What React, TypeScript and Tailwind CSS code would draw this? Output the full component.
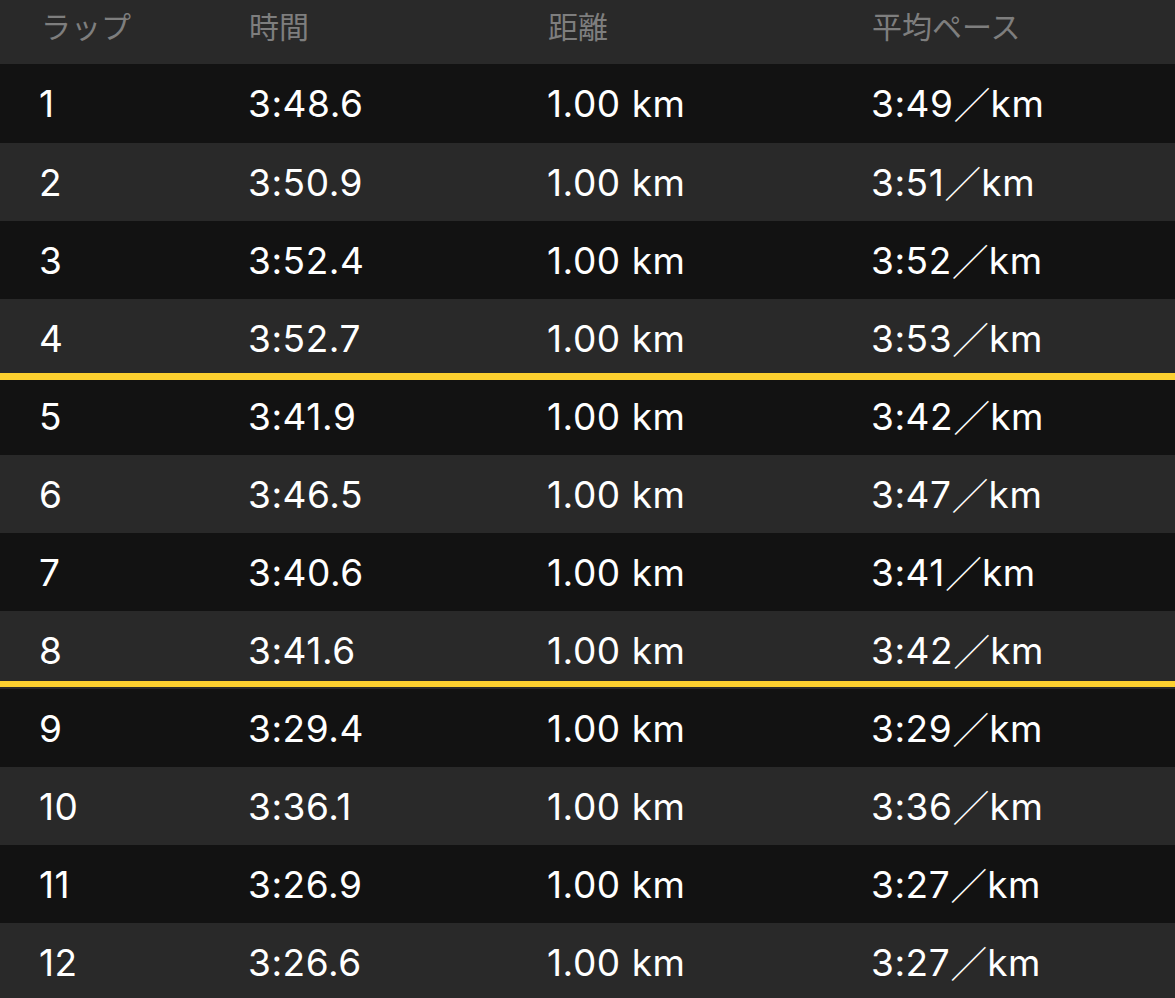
import React from "react";

type Lap = {
  lap: string;
  time: string;
  pace: string;
  dark: boolean;
  split?: string;
};

const laps: Lap[] = [
  { lap: "1", time: "3:48.6", pace: "3:49", dark: true },
  { lap: "2", time: "3:50.9", pace: "3:51", dark: false },
  { lap: "3", time: "3:52.4", pace: "3:52", dark: true },
  { lap: "4", time: "3:52.7", pace: "3:53", dark: false, split: "-bottom-[3px] h-[7px]" },
  { lap: "5", time: "3:41.9", pace: "3:42", dark: true },
  { lap: "6", time: "3:46.5", pace: "3:47", dark: false },
  { lap: "7", time: "3:40.6", pace: "3:41", dark: true },
  { lap: "8", time: "3:41.6", pace: "3:42", dark: false, split: "bottom-[2px] h-[6px]" },
  { lap: "9", time: "3:29.4", pace: "3:29", dark: true },
  { lap: "10", time: "3:36.1", pace: "3:36", dark: false },
  { lap: "11", time: "3:26.9", pace: "3:27", dark: true },
  { lap: "12", time: "3:26.6", pace: "3:27", dark: false },
];

const cols = "grid grid-cols-[209px_299px_324px_1fr] items-center pl-[39px]";

const App: React.FC = () => {
  return (
    <div className="w-[1175px] h-[998px] overflow-hidden bg-[#121212] font-['Inter','Noto_Sans_CJK_JP',sans-serif]">
      <div className={`${cols} h-[64px] bg-[#292929] pb-[13px] text-[30px] text-[#7e7e7e] font-['Noto_Sans_CJK_JP',sans-serif]`}>
        <div className="pl-[2px]">ラップ</div>
        <div className="pl-[1px]">時間</div>
        <div className="pl-[1px]">距離</div>
        <div className="pl-[1px]">平均ペース</div>
      </div>
      {laps.map((l, i) => (
        <div
          key={l.lap}
          className={`relative ${cols} ${i === 0 ? "h-[79px]" : "h-[78px]"} ${l.dark ? "bg-[#121212]" : "bg-[#292929]"} text-[37px] text-white leading-none tracking-[0.015em]`}
        >
          <div>{l.lap}</div>
          <div>{l.time}</div>
          <div>1.00 km</div>
          <div className="flex items-center">
            <span>{l.pace}</span>
            <span className="font-['Noto_Sans_CJK_JP',sans-serif] font-light tracking-normal">／</span>
            <span>km</span>
          </div>
          {l.split && <div className={`absolute left-0 right-0 z-10 ${l.split} bg-[#fcd02f]`} />}
        </div>
      ))}
    </div>
  );
};

export default App;
